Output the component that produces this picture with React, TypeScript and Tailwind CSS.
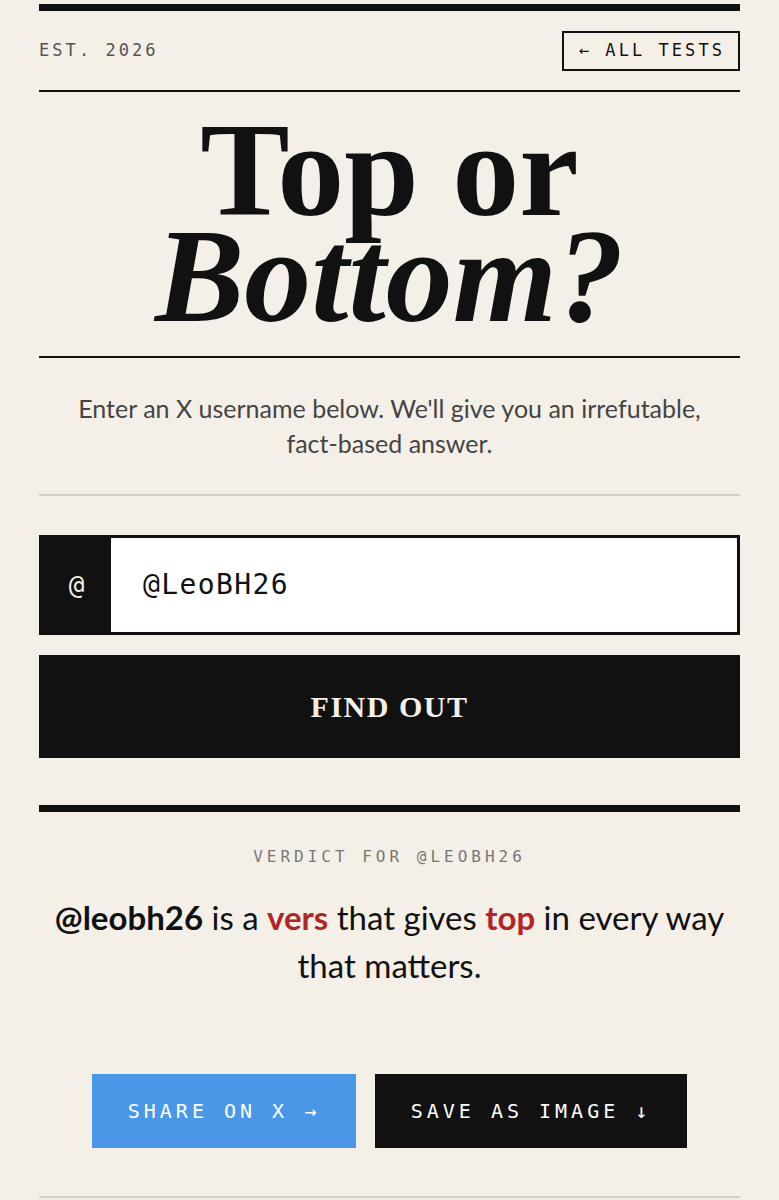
export default function App() {
  const mono = "font-['DejaVu_Sans_Mono','Liberation_Mono',monospace]";
  const serif = "font-['Liberation_Serif','DejaVu_Serif',serif]";
  const sans = "font-['Lato','Roboto','Noto_Sans',sans-serif]";

  return (
    <div className="min-h-screen bg-[#f4f0e8] text-[#111111]">
      <div className="px-[39px] pt-[4px]">
        <div className="h-[7px] bg-[#111111]" />

        <header className="flex items-center justify-between pt-[20px] pb-[19px]">
          <span className={`${mono} text-[17px] tracking-[0.18em] text-[#555555]`}>
            EST. 2026
          </span>
          <button
            className={`${mono} h-[40px] border-2 border-[#111111] pl-[15px] pr-[13px] text-[17px] tracking-[0.18em] text-[#111111]`}
          >
            ← ALL TESTS
          </button>
        </header>

        <div className="h-[2px] bg-[#111111]" />

        <h1
          className={`${serif} pt-[25px] pb-[27px] text-center text-[134px] font-black leading-[106px] text-[#111111]`}
        >
          Top or
          <br />
          <em className="italic">Bottom?</em>
        </h1>

        <div className="h-[2px] bg-[#111111]" />

        <p
          className={`${sans} py-[33px] text-center text-[25px] leading-[35px] text-[#444444]`}
        >
          Enter an X username below. We'll give you an irrefutable,
          <br />
          fact-based answer.
        </p>

        <div className="h-[2px] bg-[#d4d0c8]" />

        <div className="mt-[39px] flex h-[100px] border-[3px] border-[#111111] bg-white">
          <div
            className={`${mono} flex w-[69px] items-center justify-center bg-[#111111] text-[26px] text-[#f4f0e8]`}
          >
            @
          </div>
          <input
            defaultValue="@LeoBH26"
            className={`${mono} flex-1 bg-white pl-[32px] text-[28px] tracking-[0.05em] text-[#111111] outline-none`}
          />
        </div>

        <button
          className={`${serif} mt-[20px] flex h-[103px] w-full items-center justify-center bg-[#111111] text-[30px] font-black tracking-[0.05em] text-[#f4f0e8]`}
        >
          FIND OUT
        </button>

        <div className="mt-[47px] h-[7px] bg-[#111111]" />

        <p
          className={`${mono} mt-[35px] text-center text-[16px] leading-[20px] tracking-[0.25em] text-[#777777]`}
        >
          VERDICT FOR @LEOBH26
        </p>

        <p className={`${sans} mt-[26px] text-center text-[33px] leading-[48px] text-[#111111]`}>
          <strong className="font-bold">@leobh26</strong> is a{" "}
          <strong className="font-bold text-[#b02626]">vers</strong> that gives{" "}
          <strong className="font-bold text-[#b02626]">top</strong> in every way
          <br />
          that matters.
        </p>

        <div className="mt-[85px] flex justify-center gap-[19px]">
          <button
            className={`${mono} h-[74px] w-[264px] bg-[#4a97e8] text-[20px] tracking-[0.2em] text-white`}
          >
            SHARE ON X →
          </button>
          <button
            className={`${mono} h-[74px] w-[312px] bg-[#111111] text-[20px] tracking-[0.2em] text-white`}
          >
            SAVE AS IMAGE ↓
          </button>
        </div>

        <div className="mt-[48px] h-[2px] bg-[#d4d0c8]" />
      </div>
    </div>
  );
}
